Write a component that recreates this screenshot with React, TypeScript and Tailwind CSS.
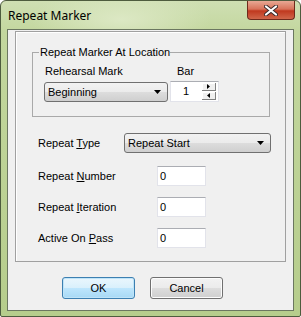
import React from "react";

const F = { fontFamily: '"Liberation Sans", Arial, sans-serif' };

function Combo({ text, w }: { text: string; w: string }) {
  return (
    <div
      className={`${w} h-[20px] flex items-center justify-between rounded-[3px] border border-[#707070] bg-[linear-gradient(to_bottom,#f2f2f2_0%,#ebebeb_50%,#dddddd_50%,#cfcfcf_100%)] pl-[3px] pr-[6px] text-[11px] leading-[13px] text-black`}
    >
      <span>{text}</span>
      <svg width="7" height="4" viewBox="0 0 7 4">
        <path d="M0 0H7L3.5 4Z" fill="#000" />
      </svg>
    </div>
  );
}

function Field({ value }: { value: string }) {
  return (
    <div className="w-[49px] h-[20px] flex items-center border border-[#e2e3ea] border-t-[#abadb3] bg-white pl-[2px] text-[11px] leading-[13px] text-black">
      {value}
    </div>
  );
}

function Row({ label, value }: { label: React.ReactNode; value: string }) {
  return (
    <div className="flex items-center">
      <div className="w-[119px] text-[11px] leading-[13px] text-black">{label}</div>
      <Field value={value} />
    </div>
  );
}

export default function App() {
  return (
    <div
      style={F}
      className="w-[301px] h-[317px] rounded-t-[6px] rounded-b-[2px] border border-[#4e5c3e] bg-[linear-gradient(to_bottom,#cfdfb3_0%,#c3d79e_10%,#b6cd8c_100%)] flex flex-col overflow-hidden"
    >
      <div className="h-[28px] flex items-start justify-between bg-[radial-gradient(ellipse_90px_30px_at_120px_18px,#dce8c4_0%,rgba(220,232,196,0)_100%)]">
        <div
          className="ml-[7px] mt-[7px] text-[12px] leading-[16px] text-black"
          style={{ fontFamily: '"Noto Sans", "Open Sans", sans-serif' }}
        >
          Repeat Marker
        </div>
        <div className="mr-[5px] w-[48px] h-[19px] rounded-b-[4px] border border-t-0 border-[#6e2a1c] bg-[linear-gradient(to_bottom,#e8a894_0%,#d8735a_45%,#c0391f_55%,#d0664a_100%)] flex items-center justify-center">
          <svg width="14" height="11" viewBox="0 0 14 11">
            <path
              d="M2 1.5L12 9.5M12 1.5L2 9.5"
              stroke="#3a2a2a"
              strokeWidth="4"
              strokeLinecap="round"
            />
            <path
              d="M2 1.5L12 9.5M12 1.5L2 9.5"
              stroke="#ffffff"
              strokeWidth="2.2"
              strokeLinecap="round"
            />
          </svg>
        </div>
      </div>
      <div className="mx-[6px] h-[282px] border border-[#6b7760] bg-[#f0f0f0] flex flex-col">
        <div className="ml-[7px] mt-[1px] w-[271px] h-[231px] border border-[#a0a0a0] shadow-[inset_1px_1px_0_#ffffff] flex flex-col">
          <div className="relative ml-[16px] mt-[20px] w-[238px] h-[65px] border border-[#a9a9a9] flex flex-col">
            <span className="absolute left-[6px] top-[-7px] bg-[#f0f0f0] pl-[1px] text-[11px] leading-[13px] text-black">
              Repeat Marker At Location
            </span>
            <div className="flex mt-[12px] text-[11px] leading-[13px] text-black">
              <span className="ml-[12px] w-[125px]">Rehearsal Mark</span>
              <span className="ml-[7px]">Bar</span>
            </div>
            <div className="flex items-end mt-[3px] ml-[11px]">
              <Combo text="Beginning" w="w-[124px]" />
              <div className="ml-[2px] w-[49px] h-[21px] flex items-center justify-between border border-[#e2e3ea] border-t-[#abadb3] bg-white text-[11px] leading-[13px] text-black">
                <span className="ml-[12px]">1</span>
                <div className="mr-[2px] flex flex-col gap-[1px]">
                  <div className="w-[14px] h-[8px] border-r border-b border-[#808080] bg-[#f0f0f0] shadow-[inset_1px_1px_0_#ffffff] flex items-center justify-center">
                    <svg width="3" height="5" viewBox="0 0 3 5">
                      <path d="M0 0L3 2.5L0 5Z" fill="#000" />
                    </svg>
                  </div>
                  <div className="w-[14px] h-[8px] border-r border-b border-[#808080] bg-[#f0f0f0] shadow-[inset_1px_1px_0_#ffffff] flex items-center justify-center">
                    <svg width="3" height="5" viewBox="0 0 3 5">
                      <path d="M3 0L0 2.5L3 5Z" fill="#000" />
                    </svg>
                  </div>
                </div>
              </div>
            </div>
          </div>
          <div className="ml-[22px] mt-[16px] flex flex-col">
            <div className="flex items-center">
              <div className="w-[86px] text-[11px] leading-[13px] text-black">
                Repeat <u>T</u>ype
              </div>
              <Combo text="Repeat Start" w="w-[147px]" />
            </div>
            <div className="mt-[13px] flex flex-col gap-[11px]">
              <Row
                label={
                  <>
                    Repeat <u>N</u>umber
                  </>
                }
                value="0"
              />
              <Row
                label={
                  <>
                    Repeat <u>I</u>teration
                  </>
                }
                value="0"
              />
              <Row
                label={
                  <>
                    Active On <u>P</u>ass
                  </>
                }
                value="0"
              />
            </div>
          </div>
        </div>
        <div className="mt-[15px] ml-[54px] flex gap-[15px] text-[11px] leading-[13px] text-black">
          <div className="w-[73px] h-[22px] rounded-[3px] border border-[#3c7fb1] bg-[linear-gradient(to_bottom,#eaf6fd_0%,#d9f0fc_50%,#bee6fd_50%,#a7d9f5_100%)] shadow-[inset_0_0_0_1px_#bfe4f8] flex items-center justify-center">
            OK
          </div>
          <div className="w-[73px] h-[22px] rounded-[3px] border border-[#707070] bg-[linear-gradient(to_bottom,#f2f2f2_0%,#ebebeb_50%,#dddddd_50%,#cfcfcf_100%)] shadow-[inset_0_0_0_1px_#fcfcfc] flex items-center justify-center">
            Cancel
          </div>
        </div>
      </div>
    </div>
  );
}
